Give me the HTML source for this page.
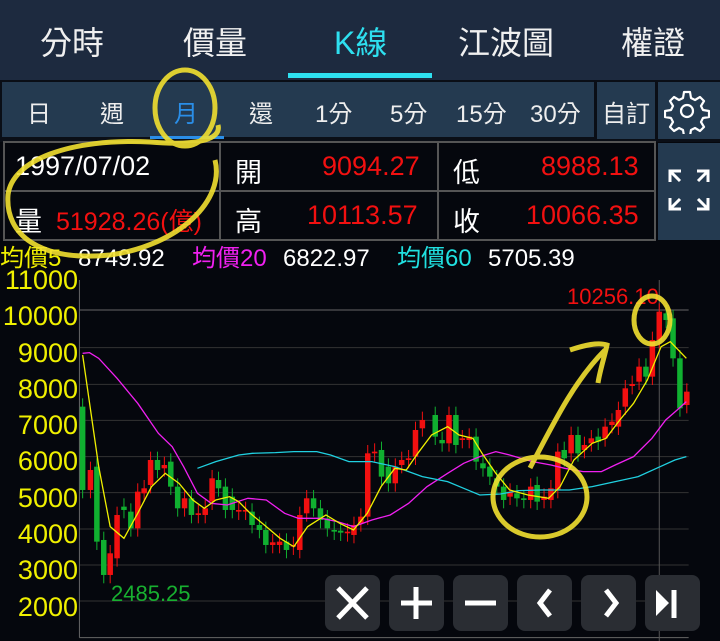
<!DOCTYPE html><html><head><meta charset="utf-8"><style>
*{margin:0;padding:0;box-sizing:border-box}
body{width:720px;height:641px;background:#05070d;overflow:hidden;position:relative;font-family:"Liberation Sans","Noto Sans CJK TC",sans-serif;color:#fff}
.a{position:absolute}
.top{left:0;top:0;width:720px;height:80px;background:#1d2a3f}
.tab{top:18px;font-size:32px;color:#f0f0f0}
.r2{left:0;top:80px;width:720px;height:62px;background:#0a0e16}
.seg{top:82px;height:55px;background:#243a50}
.p{top:94px;font-size:24px;color:#eee}
.cell{background:#05070d;border:2px solid #555;}
.t{font-size:27px;white-space:nowrap}
.red{color:#f21010}
.m{top:246px;font-size:24px;line-height:26px;height:26px;white-space:nowrap}
</style></head><body>
<div class="a top"></div>
<div class="a tab" style="left:40px">分時</div>
<div class="a tab" style="left:183px">價量</div>
<div class="a tab" style="left:334px;color:#2ee0f0">K線</div>
<div class="a tab" style="left:458px">江波圖</div>
<div class="a tab" style="left:621px">權證</div>
<div class="a" style="left:288px;top:73px;width:144px;height:5px;background:#2ee0f0"></div>
<div class="a r2"></div>
<div class="a seg" style="left:2px;width:592px"></div>
<div class="a seg" style="left:597px;width:58px;height:57px"></div>
<div class="a seg" style="left:658px;width:62px;height:57px"></div>
<div class="a p" style="left:27px">日</div>
<div class="a p" style="left:100px">週</div>
<div class="a p" style="left:174px;color:#2a8ee8">月</div>
<div class="a p" style="left:249px">還</div>
<div class="a p" style="left:315px">1分</div>
<div class="a p" style="left:390px">5分</div>
<div class="a p" style="left:456px">15分</div>
<div class="a p" style="left:530px">30分</div>
<div class="a p" style="left:602px">自訂</div>
<div class="a" style="left:150px;top:136px;width:74px;height:3px;background:#2a8ee8"></div>
<svg class="a" style="left:664px;top:88px" width="46" height="46" viewBox="0 0 46 46"><path d="M20 4h6l1 6 4 2 5-3 4 4-3 5 2 4 6 1v6l-6 1-2 4 3 5-4 4-5-3-4 2-1 6h-6l-1-6-4-2-5 3-4-4 3-5-2-4-6-1v-6l6-1 2-4-3-5 4-4 5 3 4-2z" fill="none" stroke="#fff" stroke-width="2.2" stroke-linejoin="round"/><circle cx="23" cy="23" r="6" fill="none" stroke="#fff" stroke-width="2.2"/></svg>
<div class="a" style="left:658px;top:143px;width:62px;height:97px;background:#243a50"></div>
<svg class="a" style="left:667px;top:168px" width="44" height="44" viewBox="0 0 44 44" stroke="#fff" stroke-width="3" fill="none"><path d="M3 14V3h11M3 3l10 10M41 14V3H30M41 3L31 13M3 30v11h11M3 41l10-10M41 30v11H30M41 41L31 31"/></svg>
<div class="a cell" style="left:3px;top:141px;width:218px;height:51px"></div>
<div class="a cell" style="left:219px;top:141px;width:220px;height:51px"></div>
<div class="a cell" style="left:437px;top:141px;width:219px;height:51px"></div>
<div class="a cell" style="left:3px;top:190px;width:218px;height:51px"></div>
<div class="a cell" style="left:219px;top:190px;width:220px;height:51px"></div>
<div class="a cell" style="left:437px;top:190px;width:219px;height:51px"></div>
<div class="a t" style="left:15px;top:151px">1997/07/02</div>
<div class="a t" style="left:235px;top:151px">開</div>
<div class="a t red" style="left:322px;top:151px">9094.27</div>
<div class="a t" style="left:453px;top:151px">低</div>
<div class="a t red" style="left:541px;top:151px">8988.13</div>
<div class="a t" style="left:15px;top:200px">量</div>
<div class="a t red" style="left:56px;font-size:25px;top:202px">51928.26(億)</div>
<div class="a t" style="left:235px;top:200px">高</div>
<div class="a t red" style="left:307px;top:200px">10113.57</div>
<div class="a t" style="left:453px;top:200px">收</div>
<div class="a t red" style="left:526px;top:200px">10066.35</div>
<div class="a m" style="left:0;color:#f0f000">均價5</div>
<div class="a m" style="left:78px">8749.92</div>
<div class="a m" style="left:192px;color:#f020f0">均價20</div>
<div class="a m" style="left:283px">6822.97</div>
<div class="a m" style="left:397px;color:#20e0e0">均價60</div>
<div class="a m" style="left:488px">5705.39</div>
<div class="a" style="left:0;top:272px;width:720px;height:369px;background:#05070d"></div>
<div class="a" style="left:0;top:262px;font-size:27px;color:#f0f000;line-height:36.3px;text-align:right;width:78px">11000<br>10000<br>9000<br>8000<br>7000<br>6000<br>5000<br>4000<br>3000<br>2000</div>
<svg class="a" style="left:0;top:0" width="720" height="641" viewBox="0 0 720 641">
<g transform="translate(0,280) scale(0.4591,0.3333)">
<g stroke="#333" stroke-width="1" vector-effect="non-scaling-stroke">
<line x1="173" x2="1500" y1="90" y2="90" stroke="#666" vector-effect="non-scaling-stroke"/>
<line x1="173" x2="1500" y1="203" y2="203" vector-effect="non-scaling-stroke"/><line x1="173" x2="1500" y1="313" y2="313" vector-effect="non-scaling-stroke"/><line x1="173" x2="1500" y1="421" y2="421" vector-effect="non-scaling-stroke"/><line x1="173" x2="1500" y1="530" y2="530" vector-effect="non-scaling-stroke"/><line x1="173" x2="1500" y1="638" y2="638" vector-effect="non-scaling-stroke"/><line x1="173" x2="1500" y1="747" y2="747" vector-effect="non-scaling-stroke"/><line x1="173" x2="1500" y1="855" y2="855" vector-effect="non-scaling-stroke"/><line x1="173" x2="1500" y1="963" y2="963" vector-effect="non-scaling-stroke"/>
<line x1="173" x2="173" y1="0" y2="1073" stroke="#666" vector-effect="non-scaling-stroke"/>
<line x1="173" x2="1500" y1="1073" y2="1073" stroke="#666" vector-effect="non-scaling-stroke"/>
<line x1="1436" x2="1436" y1="0" y2="1083" stroke="#555" vector-effect="non-scaling-stroke"/>
</g>
<g id="c"></g>
<polyline fill="none" stroke="#f020f0" stroke-width="1.3" vector-effect="non-scaling-stroke" points="180,220 195,218 215,235 255,295 300,370 345,460 375,500 400,560 430,640 460,670 495,675 540,655 580,660 620,700 650,715 700,715 735,725 770,740 810,720 850,705 890,670 930,620 975,580 1010,550 1045,530 1080,515 1110,525 1160,545 1200,555 1230,565 1270,575 1310,575 1340,555 1380,530 1420,475 1450,420 1475,390 1495,365"/>
<polyline fill="none" stroke="#20d0e0" stroke-width="1.3" vector-effect="non-scaling-stroke" points="430,565 470,545 520,525 550,520 600,518 640,515 690,515 720,525 760,545 810,545 860,560 920,590 975,605 1010,625 1045,645 1090,642 1130,632 1180,630 1240,630 1290,620 1340,605 1390,590 1430,565 1470,540 1495,530"/>
<polyline fill="none" stroke="#f0f000" stroke-width="1.3" vector-effect="non-scaling-stroke" points="180,225 215,560 240,740 270,775 300,700 330,620 360,580 390,610 420,660 445,685 470,660 500,650 520,665 545,700 580,740 610,775 640,800 670,740 710,705 740,730 770,750 800,700 830,620 860,565 885,570 910,520 940,465 975,440 1000,465 1030,475 1050,520 1080,580 1110,630 1150,645 1195,655 1220,620 1250,540 1290,490 1320,475 1350,420 1380,370 1410,300 1440,200 1460,185 1495,235"/>
</g>
<text x="567" y="304" fill="#f21010" font-size="22" font-family="Liberation Sans">10256.10</text>
<text x="111" y="601" fill="#18b030" font-size="22" font-family="Liberation Sans">2485.25</text>
<g fill="none" stroke="#f2e030" stroke-width="5" opacity="0.9">
<ellipse cx="185" cy="108" rx="30" ry="38"/>
<path d="M215 160C225 200 180 245 110 255C40 262 5 235 8 195C12 160 70 138 150 142C195 146 222 140 218 125"/>
<ellipse cx="540" cy="497" rx="47" ry="40"/>
<ellipse cx="652" cy="320" rx="18" ry="24"/>
<path d="M530 468C555 420 575 380 605 350M570 350C585 345 598 342 607 345C605 355 600 370 598 383"/>
</g>
</svg>
<div class="a" style="left:325px;top:575px;width:375px;height:56px">
<svg width="375" height="56" viewBox="0 0 375 56">
<g fill="#2a2d33"><rect x="0" y="0" width="55" height="56" rx="8"/><rect x="64" y="0" width="55" height="56" rx="8"/><rect x="128" y="0" width="55" height="56" rx="8"/><rect x="192" y="0" width="55" height="56" rx="8"/><rect x="256" y="0" width="55" height="56" rx="8"/><rect x="320" y="0" width="55" height="56" rx="8"/></g>
<g stroke="#fff" stroke-width="5" fill="none"><path d="M13 13l29 30M42 13L13 43"/><path d="M91 12v32M76 28h31"/><path d="M140 28h31"/><path d="M225 15l-10 13 10 13"/><path d="M281 15l10 13-10 13"/><path d="M349 15v28"/></g>
<path d="M331 15l13 13-13 13z" fill="#fff"/>
</svg></div>
<script>
var d=[[180,380,630,'g'],[197,570,630,'r'],[211,560,785,'g'],[226,780,885,'g'],[240,820,885,'r'],[255,705,835,'r'],[270,680,690,'g'],[285,695,745,'g'],[300,635,745,'r'],[314,625,640,'r'],[328,540,615,'r'],[343,540,570,'g'],[358,555,565,'r'],[372,545,620,'g'],[387,620,685,'g'],[402,655,685,'r'],[417,655,705,'g'],[432,700,705,'r'],[447,685,705,'r'],[462,595,665,'r'],[476,600,625,'g'],[491,620,690,'g'],[506,650,690,'g'],[520,690,695,'r'],[535,690,695,'r'],[549,695,735,'g'],[565,735,750,'g'],[579,750,795,'g'],[594,787,795,'r'],[609,785,795,'r'],[624,785,810,'g'],[639,795,800,'r'],[653,705,810,'r'],[668,655,700,'r'],[683,655,685,'g'],[698,685,720,'g'],[713,715,745,'g'],[728,750,755,'g'],[742,752,758,'g'],[757,755,760,'r'],[771,735,765,'r'],[786,710,730,'r'],[801,520,710,'r'],[816,515,520,'r'],[831,510,590,'g'],[846,560,610,'g'],[861,560,610,'r'],[875,540,555,'r'],[890,535,540,'r'],[905,450,530,'r'],[920,420,445,'r'],[948,405,470,'g'],[963,480,490,'g'],[978,405,490,'r'],[993,405,495,'g'],[1007,475,480,'r'],[1022,470,480,'r'],[1037,470,545,'g'],[1052,550,565,'g'],[1067,560,590,'g'],[1082,595,620,'g'],[1097,620,660,'g'],[1111,635,650,'r'],[1126,640,655,'g'],[1141,655,660,'g'],[1156,620,660,'r'],[1170,615,665,'g'],[1185,650,660,'r'],[1200,625,660,'r'],[1215,515,630,'r'],[1229,510,535,'g'],[1244,465,520,'r'],[1259,465,520,'g'],[1273,495,510,'r'],[1288,475,490,'r'],[1303,470,485,'g'],[1318,440,475,'r'],[1333,425,435,'r'],[1347,390,440,'r'],[1362,325,380,'r'],[1377,312,318,'r'],[1392,260,305,'r'],[1407,260,290,'g'],[1421,180,290,'r'],[1436,95,180,'r'],[1451,100,120,'g'],[1466,115,235,'g'],[1481,235,385,'g'],[1496,335,375,'r']];
var h='';d.forEach(function(c){var col=c[3]=='g'?'#10b030':'#f21010';h+='<line x1="'+c[0]+'" x2="'+c[0]+'" y1="'+(c[1]-25)+'" y2="'+(c[2]+25)+'" stroke="'+col+'" stroke-width="1" vector-effect="non-scaling-stroke"/><rect x="'+(c[0]-6)+'" y="'+c[1]+'" width="12" height="'+Math.max(c[2]-c[1],4)+'" fill="'+col+'"/>';});
document.getElementById('c').innerHTML=h;
</script>
</body></html>
